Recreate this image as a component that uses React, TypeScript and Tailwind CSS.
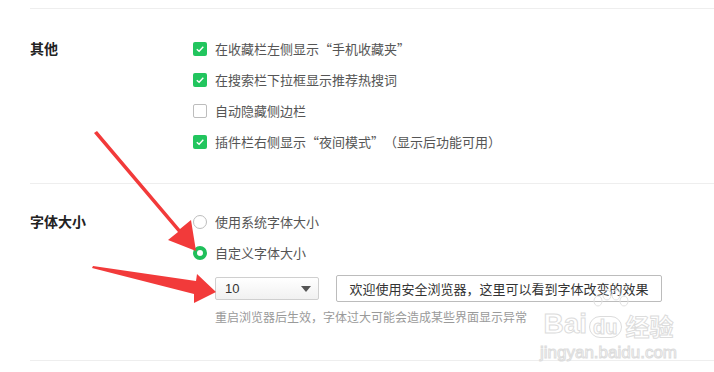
import React from 'react';

const font = { fontFamily: '"Microsoft YaHei", "Noto Sans CJK SC", sans-serif' };

function Check({ on }: { on: boolean }) {
  if (!on) {
    return <span className="w-[14px] h-[14px] rounded-[2px] border border-[#bdbdbd] bg-white shrink-0" />;
  }
  return (
    <span className="w-[14px] h-[14px] rounded-[2px] bg-[#22c55e] shrink-0 flex items-center justify-center">
      <svg width="10" height="10" viewBox="0 0 10 10">
        <path d="M1.8 5.2 L4.1 7.3 L8.3 2.8" fill="none" stroke="#fff" strokeWidth="1.4" />
      </svg>
    </span>
  );
}

function Radio({ on }: { on: boolean }) {
  return on ? (
    <span className="w-[14px] h-[14px] rounded-full border-[4px] border-[#1fbf5a] bg-white shrink-0" />
  ) : (
    <span className="w-[14px] h-[14px] rounded-full border border-[#bdbdbd] bg-white shrink-0" />
  );
}

export default function App() {
  const checks = [
    { on: true, text: '在收藏栏左侧显示“手机收藏夹”' },
    { on: true, text: '在搜索栏下拉框显示推荐热搜词' },
    { on: false, text: '自动隐藏侧边栏' },
    { on: true, text: '插件栏右侧显示“夜间模式”（显示后功能可用）' },
  ];

  return (
    <div lang="zh-CN" className="relative w-[714px] h-[372px] bg-white overflow-hidden [text-spacing-trim:space-all]" style={font}>
      <div className="pt-[8px] pl-[30px]">
        <section className="border-t border-[#eeeeee] pt-[24px] pb-[26px] grid grid-cols-[163px_1fr]">
          <div className="h-[31px] flex items-center text-[14px] font-bold text-[#222]">其他</div>
          <div className="flex flex-col">
            {checks.map((c, i) => (
              <label key={i} className="h-[31px] flex items-center gap-[8px] text-[13px] text-[#555]">
                <Check on={c.on} />
                <span>{c.text}</span>
              </label>
            ))}
          </div>
        </section>

        <section className="border-t border-[#eeeeee] pt-[22px] pb-[34px] grid grid-cols-[163px_1fr]">
          <div className="h-[31px] flex items-center text-[14px] font-bold text-[#222]">字体大小</div>
          <div className="flex flex-col">
            <label className="h-[31px] flex items-center gap-[8px] text-[13px] text-[#555]">
              <Radio on={false} />
              <span>使用系统字体大小</span>
            </label>
            <label className="h-[31px] flex items-center gap-[8px] text-[13px] text-[#555]">
              <Radio on={true} />
              <span>自定义字体大小</span>
            </label>
            <div className="mt-[7px] pl-[22px] flex items-center gap-[17px]">
              <div className="w-[104px] h-[23px] border border-[#cfcfcf] rounded-[2px] bg-gradient-to-b from-white to-[#f1f1f1] flex items-center justify-between pl-[9px] pr-[7px] text-[13px] text-[#333]" style={{ fontFamily: '"Liberation Sans", Arial, sans-serif' }}>
                <span>10</span>
                <svg width="10" height="6" viewBox="0 0 10 6"><path d="M0 0 H10 L5 6 Z" fill="#555" /></svg>
              </div>
              <div className="w-[326px] h-[27px] border border-[#bcbcbc] rounded-[2px] bg-white flex items-center justify-center text-[13px] text-[#333]">
                欢迎使用安全浏览器，这里可以看到字体改变的效果
              </div>
            </div>
            <div className="pl-[22px] mt-[6px] text-[12px] text-[#9a9a9a] leading-[18px]">
              重启浏览器后生效，字体过大可能会造成某些界面显示异常
            </div>
          </div>
        </section>
        <div className="border-t border-[#eeeeee]" />
      </div>

      {/* watermark */}
      <svg className="absolute left-[588px] top-[289px] pointer-events-none" width="44" height="22" viewBox="0 0 44 22">
        <g fill="none" stroke="#e2e2e2" strokeWidth="1">
          <ellipse cx="10" cy="12" rx="4" ry="5" />
          <ellipse cx="19" cy="6" rx="4" ry="5" />
          <ellipse cx="28" cy="6" rx="4" ry="5" />
          <ellipse cx="36" cy="12" rx="4" ry="5" />
        </g>
      </svg>
      <div className="absolute left-[540px] top-[310px] flex flex-col items-center text-transparent [-webkit-text-stroke:1px_#dcdcdc] pointer-events-none" style={{ fontFamily: '"Liberation Sans", Arial, sans-serif' }}>
        <div className="flex items-end leading-none">
          <span className="text-[28px] font-bold">Bai</span>
          <span className="text-[20px] font-bold ml-[2px] rounded-full border border-[#dcdcdc] px-[3px]">du</span>
          <span className="text-[24px] font-bold ml-[4px]" style={font}>经验</span>
        </div>
        <div className="text-[17px] mt-[6px] leading-none">jingyan.baidu.com</div>
      </div>

      {/* red arrows */}
      <svg className="absolute left-0 top-0 pointer-events-none" width="714" height="372">
        <polygon points="94,133 97,131 180,229 191,220 196,251 168,240 178,232" fill="#f23a3a" />
        <polygon points="92,268 93,266 196,281 197,274 216,292 194,303 194,294" fill="#f23a3a" />
      </svg>
    </div>
  );
}
